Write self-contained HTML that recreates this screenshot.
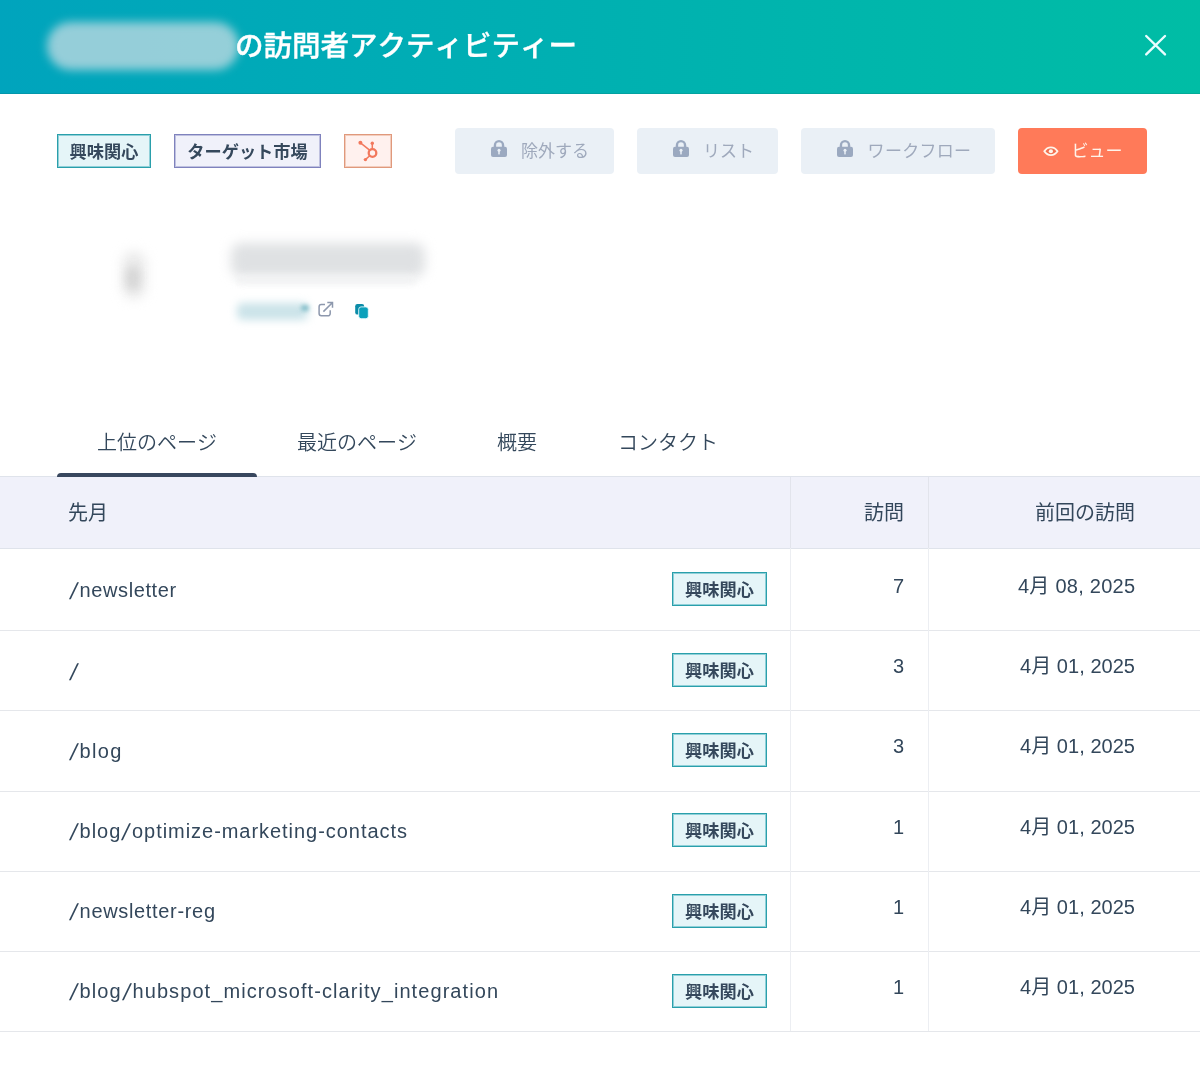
<!DOCTYPE html>
<html lang="ja">
<head>
<meta charset="utf-8">
<title>訪問者アクティビティー</title>
<style>
*{box-sizing:border-box;margin:0;padding:0}
html,body{width:1200px;height:1065px;overflow:hidden;background:#fff}
body{position:relative;font-family:"Liberation Sans","Noto Sans CJK JP",sans-serif;color:#33475b;-webkit-font-smoothing:antialiased;font-kerning:none}
#page{position:absolute;left:0;top:0;width:1200px;height:1065px;will-change:transform}
/* header */
.hdr{position:absolute;left:0;top:0;width:1200px;height:94px;background:linear-gradient(90deg,#00a4bd 0%,#00bda5 100%);box-shadow:inset 0 -1px 0 rgba(20,80,80,.16)}
.hdr .blob{position:absolute;left:47px;top:22px;width:192px;height:48px;border-radius:24px;background:rgba(206,222,228,.72);filter:blur(5px)}
.hdr h1{position:absolute;left:235px;top:-1px;height:94px;line-height:94px;font-size:28.5px;-webkit-text-stroke:0.35px #fff;font-weight:500;color:#fff;white-space:nowrap;font-family:"Liberation Sans","Noto Sans CJK JP",sans-serif}
.hdr svg{position:absolute;left:1143px;top:33px}
/* tags */
.tag{position:absolute;height:34px;border:1px solid;font-size:17.2px;font-weight:700;line-height:35.5px;text-align:center;white-space:nowrap;color:#35485c}
.tag.teal{border-color:#2a9fab;box-shadow:inset 0 0 0 1px #8fd0d8;background:#e5f5f8}
.tag.purple{border-color:#7f82bd;box-shadow:inset 0 0 0 1px #bfc1e0;background:#f0f1fa}
.tag.orange{border-color:#e0997c;box-shadow:inset 0 0 0 1px #f3cdbd;background:#fff1ee}
/* buttons */
.btn{position:absolute;top:128px;height:46px;border-radius:4px;background:#eaf0f6;color:#9fa9bc;font-size:17px;line-height:48px;white-space:nowrap}
.btn.primary{background:#ff7a59;color:#fff3ea}
.btn span{position:absolute;top:0}
.btn svg{position:absolute}
/* tabs */
.tab{position:absolute;top:427px;height:32px;line-height:32px;font-size:20px;font-weight:350;color:#33475b;white-space:nowrap}
.tabline{position:absolute;left:57px;top:473px;width:200px;height:4px;background:#38475e;border-radius:4px 4px 0 0;z-index:3}
/* table */
.thead{position:absolute;left:0;top:476px;width:1200px;height:73px;background:#f0f1fa;border-top:1px solid #dfe3eb;border-bottom:1px solid #dfe3eb}
.hline{position:absolute;left:0;width:1200px;height:1px;background:#e5e7eb}
.vline{position:absolute;top:477px;width:1px;height:554px;background:linear-gradient(#e2e4ec 0,#e2e4ec 71px,#eceef2 71px,#eceef2 100%)}
.t{position:absolute;font-size:20px;line-height:30px;white-space:nowrap;color:#33475b}
.r{text-align:right}
.sl{display:inline-block;width:11.6px;margin-left:-0.8px;font-size:23px;line-height:1;letter-spacing:0;transform-origin:0 100%;transform:translate(0.2px,1.9px) skewX(-12deg);vertical-align:baseline}
.ico{position:absolute;overflow:visible}
.blur{position:absolute}
</style>
</head>
<body>
<div id="page">
<div class="hdr">
  <div class="blob"></div>
  <h1>の訪問者アクティビティー</h1>
  <svg width="26" height="26" viewBox="0 0 26 26"><path d="M3.2 3 L22 21.4 M22 3 L3.2 21.4" stroke="#eafdff" stroke-width="2.4" stroke-linecap="round" fill="none"/></svg>
</div>

<div class="tag teal" style="left:57px;top:134px;width:94px">興味関心</div>
<div class="tag purple" style="left:174px;top:134px;width:147px">ターゲット市場</div>
<div class="tag orange" style="left:344px;top:134px;width:48px"></div>

<div class="btn" style="left:455px;width:159px"><span style="left:66px">除外する</span></div>
<div class="btn" style="left:637px;width:141px"><span style="left:66px">リスト</span></div>
<div class="btn" style="left:801px;width:194px"><span style="left:66.6px;letter-spacing:0.3px">ワークフロー</span></div>
<div class="btn primary" style="left:1018px;width:129px"><span style="left:53.5px">ビュー</span></div>

<svg class="ico" style="left:489px;top:138px" width="20" height="22" viewBox="489 138 20 22"><path d="M494.95 147.5 V145.2 a4.05 4.05 0 0 1 8.1 0 V147.5" fill="none" stroke="#9ba9c0" stroke-width="2.4"/><rect x="491" y="146.7" width="16" height="10.4" rx="2" fill="#9ba9c0"/><circle cx="499" cy="150.2" r="1.5" fill="#eaf0f6"/><rect x="498.25" y="150.2" width="1.5" height="4.2" fill="#eaf0f6"/></svg>
<svg class="ico" style="left:671px;top:138px" width="20" height="22" viewBox="671 138 20 22"><path d="M676.95 147.5 V145.2 a4.05 4.05 0 0 1 8.1 0 V147.5" fill="none" stroke="#9ba9c0" stroke-width="2.4"/><rect x="673" y="146.7" width="16" height="10.4" rx="2" fill="#9ba9c0"/><circle cx="681" cy="150.2" r="1.5" fill="#eaf0f6"/><rect x="680.25" y="150.2" width="1.5" height="4.2" fill="#eaf0f6"/></svg>
<svg class="ico" style="left:835px;top:138px" width="20" height="22" viewBox="835 138 20 22"><path d="M840.95 147.5 V145.2 a4.05 4.05 0 0 1 8.1 0 V147.5" fill="none" stroke="#9ba9c0" stroke-width="2.4"/><rect x="837" y="146.7" width="16" height="10.4" rx="2" fill="#9ba9c0"/><circle cx="845" cy="150.2" r="1.5" fill="#eaf0f6"/><rect x="844.25" y="150.2" width="1.5" height="4.2" fill="#eaf0f6"/></svg>
<svg class="ico" style="left:1041px;top:143px" width="20" height="17" viewBox="1041 143 20 17"><path d="M1044.3 151.25 C1047.8 146.1 1054 146.1 1057.5 151.25 C1054 156.4 1047.8 156.4 1044.3 151.25 Z" fill="#f26f4f" stroke="#fff4ea" stroke-width="1.9" stroke-linejoin="round"/><circle cx="1050.9" cy="151.25" r="2.1" fill="#fff4ea"/></svg>
<svg class="ico" style="left:356px;top:139px" width="24" height="24" viewBox="356 139 24 24"><circle cx="372.5" cy="153" r="3.8" fill="none" stroke="#f2785c" stroke-width="2.3"/><circle cx="372.3" cy="143.2" r="1.7" fill="#f2785c"/><path d="M372.3 143.5 V149.5" stroke="#f2785c" stroke-width="1.5" fill="none"/><circle cx="360.4" cy="142.8" r="2" fill="#f2785c"/><path d="M360.8 143.2 L369.6 150.2" stroke="#f2785c" stroke-width="1.5" fill="none"/><circle cx="365.4" cy="159.6" r="1.7" fill="#f2785c"/><path d="M365.6 159.4 L369.8 155.8" stroke="#f2785c" stroke-width="1.5" fill="none"/></svg>
<svg class="ico" style="left:316px;top:300px" width="20" height="20" viewBox="316 300 20 20"><path d="M325 304.6 H321.3 a2.2 2.2 0 0 0 -2.2 2.2 V313.6 a2.2 2.2 0 0 0 2.2 2.2 H328 a2.2 2.2 0 0 0 2.2 -2.2 V310.2" fill="none" stroke="#8d98ad" stroke-width="1.5"/><path d="M323.4 311.6 L332.3 302.8 M327.3 302.6 H332.5 V307.8" fill="none" stroke="#8d98ad" stroke-width="1.5"/></svg>
<svg class="ico" style="left:353px;top:302px" width="18" height="19" viewBox="353 302 18 19"><rect x="355.2" y="304" width="9" height="10.6" rx="2.2" fill="#0b8ca8"/><rect x="358.7" y="306.9" width="9.6" height="11.8" rx="2.4" fill="#0aa0bb" stroke="#e9fbff" stroke-width="0.9"/></svg>
<div class="blur" style="left:122px;top:251px;width:24px;height:48px;border-radius:12px;background:#ebebeb;filter:blur(6px)"></div>
<div class="blur" style="left:126px;top:266px;width:14px;height:24px;border-radius:7px;background:#d6d6d6;filter:blur(5px)"></div>
<div class="blur" style="left:231px;top:243px;width:194px;height:34px;border-radius:10px;background:#dfe1e3;filter:blur(6px)"></div>
<div class="blur" style="left:236px;top:276px;width:180px;height:8px;border-radius:4px;background:#f1f2f3;filter:blur(3px)"></div>
<div class="blur" style="left:237px;top:303px;width:71px;height:17px;border-radius:5px;background:#cbe3e9;filter:blur(4px)"></div>
<div class="blur" style="left:301px;top:305px;width:8px;height:6px;border-radius:3px;background:#7fbcc8;filter:blur(2px)"></div>
<div class="tab" style="left:97px">上位のページ</div>
<div class="tab" style="left:297px">最近のページ</div>
<div class="tab" style="left:497px">概要</div>
<div class="tab" style="left:618px">コンタクト</div>
<div class="tabline"></div>

<div class="thead"></div>

<div class="t" style="left:68px;top:498px">先月</div>
<div class="t r" style="right:296px;top:498px">訪問</div>
<div class="t r" style="right:65px;top:498px">前回の訪問</div>
<div class="t p" style="left:68.8px;top:575px;letter-spacing:0.6px"><span class="sl">/</span>newsletter</div>
<div class="tag teal" style="left:672px;top:572px;width:95px">興味関心</div>
<div class="t r" style="right:296px;top:571px">7</div>
<div class="t r" style="right:64.75px;top:571px;letter-spacing:0.25px">4月 08, 2025</div>
<div class="hline" style="top:630px"></div>
<div class="t p" style="left:68.8px;top:656px;letter-spacing:1.0px"><span class="sl">/</span></div>
<div class="tag teal" style="left:672px;top:653px;width:95px">興味関心</div>
<div class="t r" style="right:296px;top:651px">3</div>
<div class="t r" style="right:64.96px;top:651px;letter-spacing:0.04px">4月 01, 2025</div>
<div class="hline" style="top:710px"></div>
<div class="t p" style="left:68.8px;top:736px;letter-spacing:1.3px"><span class="sl">/</span>blog</div>
<div class="tag teal" style="left:672px;top:733px;width:95px">興味関心</div>
<div class="t r" style="right:296px;top:731px">3</div>
<div class="t r" style="right:64.96px;top:731px;letter-spacing:0.04px">4月 01, 2025</div>
<div class="hline" style="top:791px"></div>
<div class="t p" style="left:68.8px;top:816px;letter-spacing:0.955px"><span class="sl">/</span>blog<span class="sl">/</span>optimize-marketing-contacts</div>
<div class="tag teal" style="left:672px;top:813px;width:95px">興味関心</div>
<div class="t r" style="right:296px;top:812px">1</div>
<div class="t r" style="right:64.96px;top:812px;letter-spacing:0.04px">4月 01, 2025</div>
<div class="hline" style="top:871px"></div>
<div class="t p" style="left:68.8px;top:896px;letter-spacing:0.67px"><span class="sl">/</span>newsletter-reg</div>
<div class="tag teal" style="left:672px;top:894px;width:95px">興味関心</div>
<div class="t r" style="right:296px;top:892px">1</div>
<div class="t r" style="right:64.96px;top:892px;letter-spacing:0.04px">4月 01, 2025</div>
<div class="hline" style="top:951px"></div>
<div class="t p" style="left:68.8px;top:976px;letter-spacing:1.075px"><span class="sl">/</span>blog<span class="sl">/</span>hubspot_microsoft-clarity_integration</div>
<div class="tag teal" style="left:672px;top:974px;width:95px">興味関心</div>
<div class="t r" style="right:296px;top:972px">1</div>
<div class="t r" style="right:64.96px;top:972px;letter-spacing:0.04px">4月 01, 2025</div>
<div class="hline" style="top:1031px"></div>
<div class="vline" style="left:790px"></div>
<div class="vline" style="left:928px"></div>
</div>
</body>
</html>
